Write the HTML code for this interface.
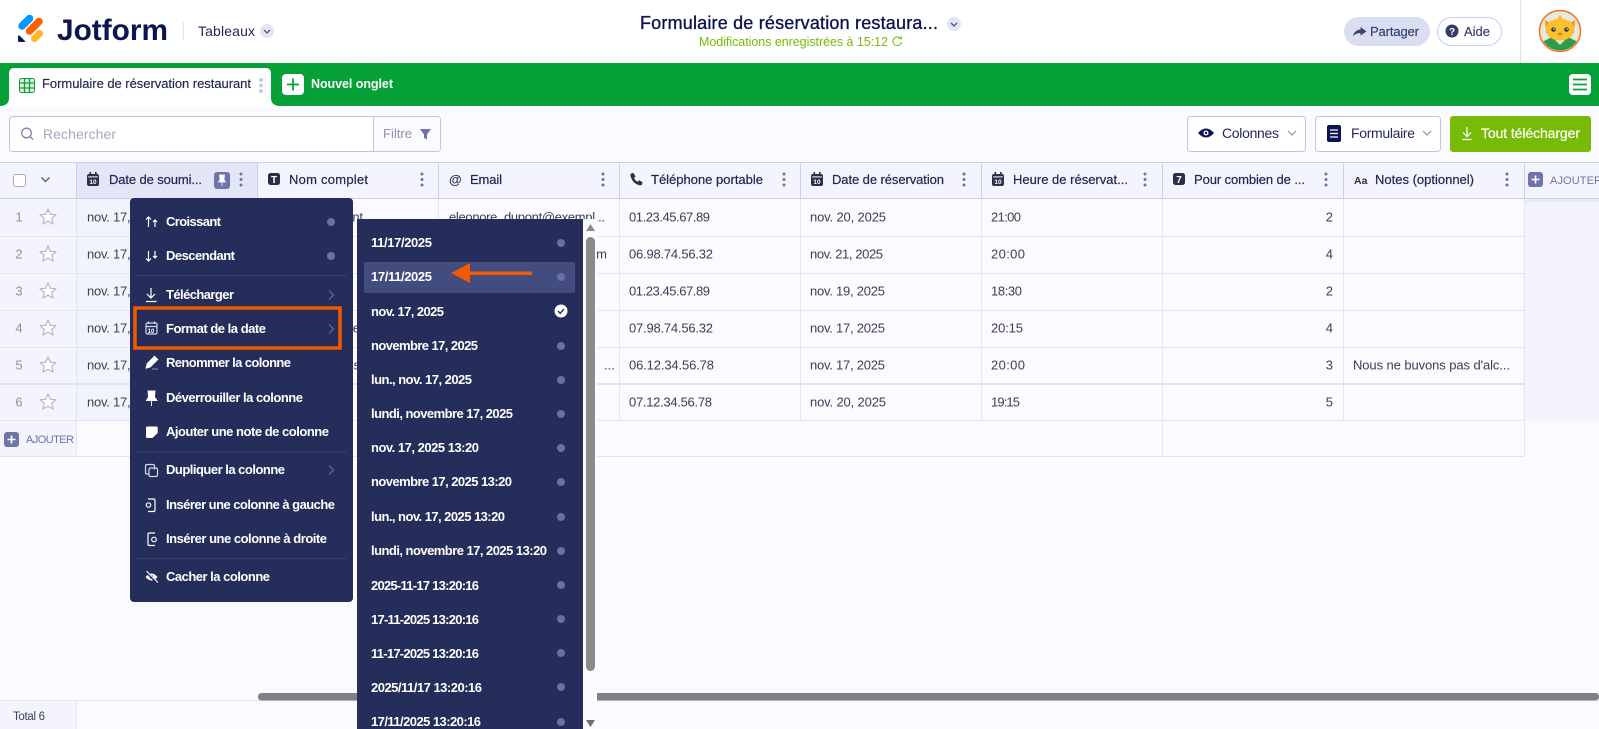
<!DOCTYPE html>
<html lang="fr"><head><meta charset="utf-8"><title>Jotform Tableaux</title>
<style>
html,body{margin:0;padding:0;width:1599px;height:729px;overflow:hidden;background:#fafaff}
svg{display:block;font-family:"Liberation Sans",sans-serif}
.h{font-size:13px;fill:#1f2450;stroke:#1f2450;stroke-width:.2}
.c{font-size:13px;fill:#3c4055}
.m{font-size:13px;font-weight:bold;fill:#fff}
.n{font-size:13px;fill:#8d90a8}
</style></head><body>
<svg width="1599" height="729" viewBox="0 0 1599 729" xmlns="http://www.w3.org/2000/svg">
<defs>
<g id="cal"><rect x="0" y="2" width="12" height="12" rx="2" fill="#2b2f48"/><rect x="2.5" y="0" width="1.6" height="3.5" fill="#2b2f48"/><rect x="8" y="0" width="1.6" height="3.5" fill="#2b2f48"/><rect x="1.2" y="4.4" width="9.6" height="1" fill="#fff"/><text x="6" y="12" font-size="6.5" font-weight="bold" fill="#fff" text-anchor="middle">10</text></g>
<g id="keb" fill="#6d72a8"><circle cx="0" cy="-5.5" r="1.5"/><circle cx="0" cy="0" r="1.5"/><circle cx="0" cy="5.5" r="1.5"/></g>
<path id="star" d="M0-8 2.3-2.700 8-2.300 3.700 1.400 5.100 7 0 4.100-5.100 7-3.700 1.400-8-2.300-2.300-2.700Z" fill="#fff" stroke="#b4b7cc" stroke-width="1.200" stroke-linejoin="round"/>
<path id="chev" d="M0 0 4.500 4.500 0 9" fill="none" stroke="#5e6594" stroke-width="1.300"/>
</defs>

<!-- page -->
<rect width="1599" height="729" fill="#fafaff"/>
<!-- top bar -->
<rect width="1599" height="63" fill="#fff"/>
<g stroke-linecap="round" fill="none">
<path d="M22 26 29.500 18.500" stroke="#0099ff" stroke-width="7.500"/>
<path d="M29.500 31 39 21.500" stroke="#ff6100" stroke-width="7.500"/>
<path d="M34.500 38.500 39.500 33.500" stroke="#ffb629" stroke-width="7"/>
</g>
<path d="M18 36.500C18 35.500 19 35 19.700 35.700L25 41C25.600 41.600 25.200 42 24.400 42H19.500C18.600 42 18 41.400 18 40.500Z" fill="#0a1551"/>
<text x="57" y="40" font-size="30" font-weight="bold" fill="#0a1551" textLength="111" lengthAdjust="spacingAndGlyphs">Jotform</text>
<rect x="183" y="22" width="1" height="18" fill="#dfe1ee"/>
<text x="198" y="36" font-size="14" fill="#1f2450" textLength="57">Tableaux</text>
<circle cx="267" cy="31" r="7" fill="#e3e5f5"/><path d="M264 30 267 33 270 30" fill="none" stroke="#4c5280" stroke-width="1.300"/>

<text x="640" y="29" font-size="18" fill="#0a1551" stroke="#0a1551" stroke-width=".35" textLength="298">Formulaire de réservation restaura...</text>
<circle cx="954" cy="24" r="7" fill="#e3e5f5"/><path d="M951 23 954 26 957 23" fill="none" stroke="#4c5280" stroke-width="1.300"/>
<text x="699" y="46" font-size="12.500" fill="#78bb07" textLength="189">Modifications enregistrées à 15:12</text>
<path d="M900.500 38.500A4.300 4.300 0 1 0 901.500 42" fill="none" stroke="#78bb07" stroke-width="1"/><path d="M898.500 38.500 901.500 38.700 901 35.800" fill="none" stroke="#78bb07" stroke-width="1"/>

<rect x="1344" y="17" width="86" height="29" rx="14.500" fill="#dadef3"/>
<path d="M1353 36C1354 31.500 1357.500 29.500 1360.500 29.500V27L1366.500 31.500 1360.500 35.500V33C1357.500 33 1355 34 1353 36Z" fill="#3d4470"/>
<text x="1370" y="36" font-size="13" fill="#343c6a" stroke="#343c6a" stroke-width=".15" textLength="49">Partager</text>
<rect x="1437.500" y="17.500" width="64" height="28" rx="14" fill="#fff" stroke="#c8ceed"/>
<circle cx="1452" cy="31" r="6.500" fill="#343c6a"/><text x="1452" y="35" font-size="10" font-weight="bold" fill="#fff" text-anchor="middle">?</text>
<text x="1464" y="36" font-size="13" fill="#343c6a" stroke="#343c6a" stroke-width=".15" textLength="26">Aide</text>
<rect x="1520" y="0" width="1" height="63" fill="#dfe1ee"/>
<!-- avatar -->
<circle cx="1560" cy="31" r="20.500" fill="#e6e9dd" stroke="#f37021" stroke-width="1.500"/>
<clipPath id="av"><circle cx="1560" cy="31" r="19.500"/></clipPath>
<g clip-path="url(#av)">
<path d="M1540 52V43L1552 37H1568L1580 43V52Z" fill="#2e9b48"/>
<path d="M1555 40 1560 45 1565 40Z" fill="#d7ecd5"/>
<path d="M1545 20 1552 24 1568 24 1575 20 1574 33 1546 33Z" fill="#f6941d"/>
<path d="M1557 20 1560 15 1563 20Z" fill="#f9b233"/>
<ellipse cx="1560" cy="29.500" rx="14.500" ry="11" fill="#fbc02d"/>
<circle cx="1553.500" cy="29.500" r="2.300" fill="#3a3a3a"/><circle cx="1566.500" cy="29.500" r="2.300" fill="#3a3a3a"/>
<circle cx="1554" cy="29" r=".8" fill="#fff"/><circle cx="1567" cy="29" r=".8" fill="#fff"/>
<path d="M1557.500 33.500Q1560 36 1562.500 33.500Z" fill="#8a3b12"/>
</g>

<!-- green tab bar -->
<rect y="63" width="1599" height="43" fill="#05a036"/>
<path d="M0 106C6 106 9 103 9 98V73C9 70 11 68 14 68H266C269 68 271 70 271 73V98C271 103 274 106 280 106Z" fill="#fff"/>
<rect x="19.500" y="78.500" width="15" height="14" rx="2" fill="#dff3e4" stroke="#0aa13a"/>
<path d="M19.500 83H34.500M19.500 88H34.500M24.500 78.500V92.500M29.500 78.500V92.500" stroke="#0aa13a" stroke-width="1.300"/>
<text x="42" y="88" font-size="13" fill="#1f2450" stroke="#1f2450" stroke-width=".15" textLength="209">Formulaire de réservation restaurant</text>
<g fill="#c6cbe8"><circle cx="261" cy="80" r="2"/><circle cx="261" cy="85.500" r="2"/><circle cx="261" cy="91" r="2"/></g>
<rect x="282" y="74" width="22" height="21" rx="4" fill="#fff"/><path d="M293 78.500V90.500M287 84.500H299" stroke="#0aa13a" stroke-width="1.800"/>
<text x="311" y="88" font-size="12.500" font-weight="bold" fill="#fff" textLength="82">Nouvel onglet</text>
<rect x="1569" y="74" width="22" height="21" rx="4" fill="#fff"/><path d="M1573 79.500H1587M1573 84.500H1587M1573 89.500H1587" stroke="#0aa13a" stroke-width="1.800"/>

<!-- toolbar -->
<rect x="9.500" y="116.500" width="431" height="35" rx="3" fill="#fff" stroke="#c3c6da"/>
<path d="M373.500 117H438C439.500 117 440 118 440 119V149C440 150 439.500 151 438 151H373.500Z" fill="#fafaff"/>
<path d="M373.500 117V151" stroke="#c3c6da"/>
<circle cx="26.500" cy="133" r="4.800" fill="none" stroke="#7f83a5" stroke-width="1.300"/><path d="M30 136.500 33 139.500" stroke="#7f83a5" stroke-width="1.300"/>
<text x="43" y="139" font-size="14" fill="#a5a8c0" textLength="73">Rechercher</text>
<text x="383" y="138" font-size="13" fill="#8f92b0" textLength="29">Filtre</text>
<path d="M420 129H431L427 134.500V139.500L424 138V134.500Z" fill="#6d72a8"/>
<rect x="1187.500" y="116.500" width="118" height="35" rx="3" fill="#fff" stroke="#c3c6da"/>
<path d="M1198 133Q1206 124 1214 133 1206 142 1198 133Z" fill="#0a1551"/><circle cx="1206" cy="133" r="2.500" fill="#fff"/><circle cx="1206" cy="133" r="1.200" fill="#0a1551"/>
<text x="1222" y="138" font-size="14" fill="#23285a" textLength="57">Colonnes</text>
<path d="M1288 131 1292 135 1296 131" fill="none" stroke="#8f92b0" stroke-width="1.200"/>
<rect x="1315.500" y="116.500" width="125" height="35" rx="3" fill="#fff" stroke="#c3c6da"/>
<rect x="1327" y="125" width="14" height="17" rx="2" fill="#0a1551"/><path d="M1330 130H1338M1330 133.500H1338M1330 137H1338" stroke="#fff" stroke-width="1.300"/>
<text x="1351" y="138" font-size="14" fill="#23285a" textLength="64">Formulaire</text>
<path d="M1423 131 1427 135 1431 131" fill="none" stroke="#8f92b0" stroke-width="1.200"/>
<rect x="1450" y="116" width="141" height="36" rx="3" fill="#78bb07"/>
<path d="M1467 127V136.500M1463 132.500 1467 136.500 1471 132.500M1462.500 139.500H1471.500" fill="none" stroke="#fff" stroke-width="1.200"/>
<text x="1481" y="138" font-size="14" fill="#fff" stroke="#fff" stroke-width=".2" textLength="99">Tout télécharger</text>

<!-- grid header -->
<rect y="162" width="1599" height="37" fill="#f3f4fd"/>
<rect x="76" y="162" width="181" height="37" fill="#e3e6f6"/>
<path d="M0 162.500H1599M0 198.500H1599" stroke="#c8d0ef"/>
<path d="M76.500 162V199M257.500 162V199M438.500 162V199M619.500 162V199M800.500 162V199M981.500 162V199M1162.500 162V199M1343.500 162V199M1524.500 162V199" stroke="#c8d0ef"/>
<rect x="13.500" y="174.500" width="12" height="12" rx="2" fill="#fff" stroke="#a9adc8"/>
<path d="M41.500 177.500 45.500 181.500 49.500 177.500" fill="none" stroke="#5f6594" stroke-width="1.500"/>

<use href="#cal" x="87" y="172"/>
<text x="109" y="184" class="h" textLength="93">Date de soumi...</text>
<rect x="214" y="172" width="16" height="17" rx="3" fill="#6f74ab"/>
<path d="M219.500 175H224.500L224 180 225.500 182H218.500L220 180ZM222 182V186" fill="#fff" stroke="#fff" stroke-width=".7"/>
<use href="#keb" x="241" y="179.500"/>
<rect x="268" y="173" width="12" height="12" rx="2.500" fill="#2b2f48"/><text x="274" y="183" font-size="10" font-weight="bold" fill="#fff" text-anchor="middle">T</text>
<text x="289" y="184" class="h" textLength="79">Nom complet</text>
<use href="#keb" x="422" y="179.500"/>
<text x="449" y="184" font-size="13" font-weight="bold" fill="#2b2f48">@</text>
<text x="470" y="184" class="h" textLength="32">Email</text>
<use href="#keb" x="603" y="179.500"/>
<path d="M631 173.500 633.500 173 635.500 176.500 634 178C634.800 179.800 636 181 637.800 181.800L639.300 180.300 642.500 182.300 642 184.500C641.500 185.200 640.500 185.500 639.500 185.300 634.500 184 631.500 180.500 630.500 175.500 630.400 174.700 630.500 174 631 173.500Z" fill="#2b2f48"/>
<text x="651" y="184" class="h" textLength="112">Téléphone portable</text>
<use href="#keb" x="784" y="179.500"/>
<use href="#cal" x="811" y="172"/>
<text x="832" y="184" class="h" textLength="112">Date de réservation</text>
<use href="#keb" x="964" y="179.500"/>
<use href="#cal" x="992" y="172"/>
<text x="1013" y="184" class="h" textLength="115">Heure de réservat...</text>
<use href="#keb" x="1145" y="179.500"/>
<rect x="1173" y="173" width="12" height="12" rx="2.500" fill="#2b2f48"/><text x="1179" y="183" font-size="10" font-weight="bold" fill="#fff" text-anchor="middle">7</text>
<text x="1194" y="184" class="h" textLength="111">Pour combien de ...</text>
<use href="#keb" x="1326" y="179.500"/>
<text x="1354" y="184" font-size="10.500" font-weight="bold" fill="#2b2f48">Aa</text>
<text x="1375" y="184" class="h" textLength="99">Notes (optionnel)</text>
<use href="#keb" x="1507" y="179.500"/>
<rect x="1528" y="172" width="15" height="15" rx="3" fill="#6f74ab"/><path d="M1535.500 175.500V183.500M1531.500 179.500H1539.500" stroke="#fff" stroke-width="1.600"/>
<text x="1550" y="184" font-size="11" fill="#6f74ab" textLength="52">AJOUTER</text>

<!-- left, date, ajouter columns -->
<rect y="199" width="76" height="258" fill="#f3f4fc"/>
<rect x="77" y="199" width="180" height="222" fill="#f1f4fd"/>
<rect x="1525" y="199" width="74" height="222" fill="#f3f4fc"/>
<rect x="1525" y="199" width="74" height="3" fill="#e9ebf7"/>
<path d="M0 236.500H1525M0 273.500H1525M0 310.500H1525M0 347.500H1525M0 420.500H1525M0 456.500H1525" stroke="#e3e5f6"/>
<path d="M0 384H1525" stroke="#dadcf0" stroke-width="1.500"/>
<path d="M76.500 199V457M257.500 199V421M438.500 199V421M619.500 199V421M800.500 199V421M981.500 199V421M1162.500 199V457M1343.500 199V421M1524.500 199V457" stroke="#e3e5f6"/>

<text x="19" y="221.500" class="n" text-anchor="middle">1</text><use href="#star" x="48" y="217"/>
<text x="19" y="258.500" class="n" text-anchor="middle">2</text><use href="#star" x="48" y="254"/>
<text x="19" y="295.500" class="n" text-anchor="middle">3</text><use href="#star" x="48" y="291"/>
<text x="19" y="332.500" class="n" text-anchor="middle">4</text><use href="#star" x="48" y="328"/>
<text x="19" y="369.500" class="n" text-anchor="middle">5</text><use href="#star" x="48" y="365"/>
<text x="19" y="406.500" class="n" text-anchor="middle">6</text><use href="#star" x="48" y="402"/>

<g class="c">
<text class="c" x="87" y="221.500" textLength="75">nov. 17, 2025</text><text class="c" x="87" y="258.500" textLength="75">nov. 17, 2025</text><text class="c" x="87" y="295.500" textLength="75">nov. 17, 2025</text><text class="c" x="87" y="332.500" textLength="75">nov. 17, 2025</text><text class="c" x="87" y="369.500" textLength="75">nov. 17, 2025</text><text class="c" x="87" y="406.500" textLength="75">nov. 17, 2025</text>
<text class="c" x="268" y="221.500" textLength="95">Eléonore Dupont</text>
<text class="c" x="449" y="221.500" textLength="156">eleonore_dupont@exempl...</text>
<text class="c" x="449" y="258.500" textLength="158">jean.martin@example.com</text>
<text class="c" x="449" y="369.500" textLength="145">marie.bernard@exempl</text><text class="c" x="604" y="369.500">...</text>
<text class="c" x="268" y="332.500" textLength="92">Sophie Lefebvre</text>
<text class="c" x="268" y="369.500" textLength="92">Camille Dubois</text>

<text class="c" x="629" y="221.500" textLength="81">01.23.45.67.89</text><text class="c" x="810" y="221.500" textLength="76">nov. 20, 2025</text><text class="c" x="991" y="221.500" textLength="30">21:00</text><text class="c" x="1333" y="221.500" text-anchor="end">2</text>
<text class="c" x="629" y="258.500" textLength="84">06.98.74.56.32</text><text class="c" x="810" y="258.500" textLength="73">nov. 21, 2025</text><text class="c" x="991" y="258.500" textLength="34">20:00</text><text class="c" x="1333" y="258.500" text-anchor="end">4</text>
<text class="c" x="629" y="295.500" textLength="81">01.23.45.67.89</text><text class="c" x="810" y="295.500" textLength="75">nov. 19, 2025</text><text class="c" x="991" y="295.500" textLength="31">18:30</text><text class="c" x="1333" y="295.500" text-anchor="end">2</text>
<text class="c" x="629" y="332.500" textLength="84">07.98.74.56.32</text><text class="c" x="810" y="332.500" textLength="75">nov. 17, 2025</text><text class="c" x="991" y="332.500" textLength="32">20:15</text><text class="c" x="1333" y="332.500" text-anchor="end">4</text>
<text class="c" x="629" y="369.500" textLength="85">06.12.34.56.78</text><text class="c" x="810" y="369.500" textLength="75">nov. 17, 2025</text><text class="c" x="991" y="369.500" textLength="34">20:00</text><text class="c" x="1333" y="369.500" text-anchor="end">3</text><text class="c" x="1353" y="369.500" textLength="157">Nous ne buvons pas d'alc...</text>
<text class="c" x="629" y="406.500" textLength="83">07.12.34.56.78</text><text class="c" x="810" y="406.500" textLength="76">nov. 20, 2025</text><text class="c" x="991" y="406.500" textLength="29">19:15</text><text class="c" x="1333" y="406.500" text-anchor="end">5</text>
</g>

<rect x="4" y="432" width="15" height="15" rx="3" fill="#6f74ab"/><path d="M11.500 435.500V443.500M7.500 439.500H15.500" stroke="#fff" stroke-width="1.600"/>
<text x="26" y="443" font-size="11" fill="#6f74ab" textLength="48">AJOUTER</text>

<!-- footer -->
<rect y="700" width="76" height="29" fill="#f3f4fc"/>
<path d="M0 700.500H1599M76.500 700V729" stroke="#e3e5f6"/>
<text x="13" y="720" font-size="11.500" fill="#3c4055" textLength="32">Total 6</text>
<rect x="258" y="693" width="1341" height="7.500" rx="3.500" fill="#808080"/>

<!-- submenu -->
<rect x="357" y="219" width="226" height="510" fill="#252d5b"/>
<rect x="583" y="219" width="14" height="510" fill="#fafaff"/>
<path d="M590.500 224 595 231H586Z" fill="#8a8a8a"/>
<rect x="586" y="237" width="9" height="434" rx="4.500" fill="#8a8a8a"/>
<path d="M586 720H595L590.500 727Z" fill="#6e6e6e"/>
<rect x="364" y="262" width="211" height="31" rx="2" fill="#434c7e"/>
<g fill="#6a70a5">
<circle cx="561" cy="243" r="4"/><circle cx="561" cy="277" r="4"/><circle cx="561" cy="346" r="4"/><circle cx="561" cy="380" r="4"/><circle cx="561" cy="414" r="4"/><circle cx="561" cy="448" r="4"/><circle cx="561" cy="482" r="4"/><circle cx="561" cy="517" r="4"/><circle cx="561" cy="551" r="4"/><circle cx="561" cy="585" r="4"/><circle cx="561" cy="619" r="4"/><circle cx="561" cy="653" r="4"/><circle cx="561" cy="687" r="4"/><circle cx="561" cy="722" r="4"/>
</g>
<circle cx="561" cy="311" r="6.500" fill="#fff"/><path d="M558 311 560.200 313.300 564 309" fill="none" stroke="#252d5b" stroke-width="1.400"/>
<text class="m" x="371" y="247" textLength="61">11/17/2025</text>
<text class="m" x="371" y="281" textLength="61">17/11/2025</text>
<text class="m" x="371" y="316" textLength="73">nov. 17, 2025</text>
<text class="m" x="371" y="350" textLength="107">novembre 17, 2025</text>
<text class="m" x="371" y="384" textLength="101">lun., nov. 17, 2025</text>
<text class="m" x="371" y="418" textLength="142">lundi, novembre 17, 2025</text>
<text class="m" x="371" y="452" textLength="108">nov. 17, 2025 13:20</text>
<text class="m" x="371" y="486" textLength="141">novembre 17, 2025 13:20</text>
<text class="m" x="371" y="521" textLength="134">lun., nov. 17, 2025 13:20</text>
<text class="m" x="371" y="555" textLength="176">lundi, novembre 17, 2025 13:20</text>
<text class="m" x="371" y="590" textLength="108">2025-11-17 13:20:16</text>
<text class="m" x="371" y="624" textLength="108">17-11-2025 13:20:16</text>
<text class="m" x="371" y="658" textLength="108">11-17-2025 13:20:16</text>
<text class="m" x="371" y="692" textLength="111">2025/11/17 13:20:16</text>
<text class="m" x="371" y="726" textLength="110">17/11/2025 13:20:16</text>
<!-- arrow -->
<path d="M451 273 470 263V271.500H532V275H470V283Z" fill="#f15a00"/>

<!-- main menu -->
<rect x="130" y="198" width="223" height="404" rx="4" fill="#252d5b"/>
<path d="M137 275.500H346M137 452H346M137 558.500H346" stroke="#3a4270"/>
<circle cx="331" cy="222" r="4" fill="#6a70a5"/><circle cx="331" cy="256" r="4" fill="#6a70a5"/>
<use href="#chev" x="329" y="290.500"/><use href="#chev" x="329" y="324.500"/><use href="#chev" x="329" y="465.500"/>

<g fill="none" stroke="#fff" stroke-width="1.200">
<path d="M148.500 227V217M146 219.500 148.500 217 151 219.500M155 227V220M153 222 155 220 157 222"/>
<path d="M148.500 251V261M146 258.500 148.500 261 151 258.500M155 251V258M153 256 155 258 157 256"/>
<path d="M151 288V298M147 294 151 298 155 294M146 301.500H156.500"/>
<rect x="146" y="323" width="11" height="11" rx="1.500" stroke="#d5d8ea"/><path d="M146 326.500H157M148.500 321.500V324M154.500 321.500V324" stroke="#d5d8ea"/>
<path d="M154.500 469.500V466C154.500 465 154 464.500 153 464.500H147C146 464.500 145.500 465 145.500 466V472.500C145.500 473.500 146 474 147 474H149" stroke="#d5d8ea"/>
<rect x="149" y="468" width="8.500" height="8.500" rx="1.500" stroke="#d5d8ea"/>
<path d="M148 499H153.500C154.500 499 155 499.500 155 500.500V510C155 511 154.500 511.500 153.500 511.500H148"/>
<circle cx="148.500" cy="505" r="2.200"/>
<path d="M155 533H149.500C148.500 533 148 533.500 148 534.500V544C148 545 148.500 545.500 149.500 545.500H155"/>
<circle cx="154" cy="539.500" r="2.300"/>
</g>
<text x="151" y="333" font-size="6" font-weight="bold" fill="#fff" text-anchor="middle">10</text>
<path d="M146 367.500 147 363.500 154.500 356 158 359.500 150.500 367 146 368.500Z M152 369H158" fill="#fff" stroke="#fff" stroke-width=".6"/>
<path d="M148 391H155L154.500 397 157 400.500H146.500L148.500 397ZM151.500 400.500V406" fill="#fff" stroke="#fff" stroke-width=".9"/>
<path d="M147.500 426.500H156.500C157.200 426.500 157.700 427 157.700 427.700V433L152.500 438H147.500C146.500 438 146 437.500 146 436.500V428C146 427 146.500 426.500 147.500 426.500Z" fill="#fff"/>
<path d="M145.500 577Q151.500 570 157.500 577 151.500 584 145.500 577Z" fill="#fff"/><circle cx="151.500" cy="577" r="1.800" fill="#252d5b"/><path d="M146 571.500 157.500 583" stroke="#252d5b" stroke-width="2.400"/><path d="M146.500 571 158 582.500" stroke="#fff" stroke-width="1.100"/>

<text class="m" x="166" y="226" textLength="55">Croissant</text>
<text class="m" x="166" y="260" textLength="69">Descendant</text>
<text class="m" x="166" y="299" textLength="68">Télécharger</text>
<text class="m" x="166" y="333" textLength="100">Format de la date</text>
<text class="m" x="166" y="367" textLength="125">Renommer la colonne</text>
<text class="m" x="166" y="402" textLength="137">Déverrouiller la colonne</text>
<text class="m" x="166" y="436" textLength="163">Ajouter une note de colonne</text>
<text class="m" x="166" y="474" textLength="119">Dupliquer la colonne</text>
<text class="m" x="166" y="509" textLength="169">Insérer une colonne à gauche</text>
<text class="m" x="166" y="543" textLength="161">Insérer une colonne à droite</text>
<text class="m" x="166" y="581" textLength="104">Cacher la colonne</text>

<!-- orange highlight box -->
<rect x="135" y="308" width="205" height="40" fill="none" stroke="#f15a00" stroke-width="3.500"/>
</svg>
</body></html>
